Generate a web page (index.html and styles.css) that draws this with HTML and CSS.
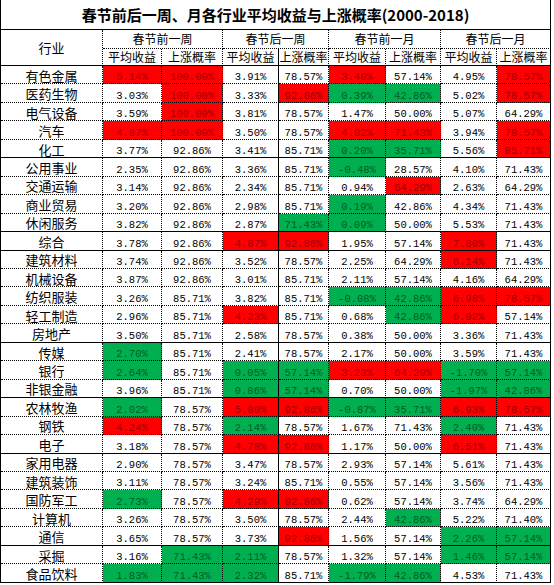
FILE: index.html
```html
<!DOCTYPE html>
<html lang="zh">
<head>
<meta charset="utf-8">
<title>春节前后一周、月各行业平均收益与上涨概率</title>
<link rel="stylesheet" href="styles.css">
</head>
<body>
<div class="sheet">
  <div class="title">春节前后一周、月各行业平均收益与上涨概率(2000-2018)</div>

  <div class="hd ind">行业</div>
  <div class="hd grp">春节前一周</div>
  <div class="hd grp">春节后一周</div>
  <div class="hd grp">春节前一月</div>
  <div class="hd grp last">春节后一月</div>

  <div class="hd sub">平均收益</div>
  <div class="hd sub">上涨概率</div>
  <div class="hd sub solid-r">平均收益</div>
  <div class="hd sub">上涨概率</div>
  <div class="hd sub">平均收益</div>
  <div class="hd sub">上涨概率</div>
  <div class="hd sub">平均收益</div>
  <div class="hd sub last">上涨概率</div>

  <div class="row"><div>有色金属</div><div class="r">5.14%</div><div class="r">100.00%</div><div>3.91%</div><div>78.57%</div><div class="r">3.40%</div><div>57.14%</div><div>4.95%</div><div class="r">78.57%</div></div>
  <div class="row"><div>医药生物</div><div>3.03%</div><div class="r">100.00%</div><div>3.33%</div><div class="r">92.86%</div><div class="g">0.39%</div><div class="g">42.86%</div><div>5.02%</div><div class="r">78.57%</div></div>
  <div class="row"><div>电气设备</div><div>3.59%</div><div class="r">100.00%</div><div>3.81%</div><div>78.57%</div><div>1.47%</div><div>50.00%</div><div>5.07%</div><div>64.29%</div></div>
  <div class="row"><div>汽车</div><div class="r">4.87%</div><div class="r">100.00%</div><div>3.50%</div><div>78.57%</div><div class="r">4.02%</div><div class="r">71.43%</div><div>3.94%</div><div class="r">78.57%</div></div>
  <div class="row s"><div>化工</div><div>3.77%</div><div>92.86%</div><div>3.41%</div><div>85.71%</div><div class="g">0.20%</div><div class="g">35.71%</div><div>5.56%</div><div class="r">85.71%</div></div>
  <div class="row"><div>公用事业</div><div>2.35%</div><div>92.86%</div><div>3.36%</div><div>85.71%</div><div class="g">-0.48%</div><div>28.57%</div><div>4.10%</div><div>71.43%</div></div>
  <div class="row"><div>交通运输</div><div>3.14%</div><div>92.86%</div><div>2.34%</div><div>85.71%</div><div>0.94%</div><div class="r">64.29%</div><div>2.63%</div><div>64.29%</div></div>
  <div class="row"><div>商业贸易</div><div>3.20%</div><div>92.86%</div><div>2.98%</div><div>85.71%</div><div class="g">0.19%</div><div>42.86%</div><div>4.34%</div><div>71.43%</div></div>
  <div class="row s"><div>休闲服务</div><div>3.82%</div><div>92.86%</div><div>2.87%</div><div class="g">71.43%</div><div class="g">0.09%</div><div>50.00%</div><div>5.53%</div><div>71.43%</div></div>
  <div class="row s"><div>综合</div><div>3.78%</div><div>92.86%</div><div class="r">4.87%</div><div class="r">92.86%</div><div>1.95%</div><div>57.14%</div><div class="r">7.80%</div><div>71.43%</div></div>
  <div class="row"><div>建筑材料</div><div>3.74%</div><div>92.86%</div><div>3.52%</div><div>78.57%</div><div>2.25%</div><div>64.29%</div><div class="r">6.14%</div><div>71.43%</div></div>
  <div class="row"><div>机械设备</div><div>3.87%</div><div>92.86%</div><div>3.01%</div><div>85.71%</div><div>2.11%</div><div>57.14%</div><div>4.16%</div><div>64.29%</div></div>
  <div class="row"><div>纺织服装</div><div>3.26%</div><div>85.71%</div><div>3.82%</div><div>85.71%</div><div class="g">-0.08%</div><div class="g">42.86%</div><div class="r">6.98%</div><div class="r">78.57%</div></div>
  <div class="row"><div>轻工制造</div><div>2.96%</div><div>85.71%</div><div class="r">4.23%</div><div>85.71%</div><div>0.68%</div><div class="g">42.86%</div><div class="r">6.02%</div><div>57.14%</div></div>
  <div class="row s"><div>房地产</div><div>3.50%</div><div>85.71%</div><div>2.58%</div><div>78.57%</div><div>0.38%</div><div>50.00%</div><div>3.36%</div><div>71.43%</div></div>
  <div class="row"><div>传媒</div><div class="g">2.70%</div><div>85.71%</div><div>2.41%</div><div>78.57%</div><div>2.17%</div><div>50.00%</div><div>3.59%</div><div>71.43%</div></div>
  <div class="row"><div>银行</div><div class="g">2.64%</div><div>85.71%</div><div class="g">0.05%</div><div class="g">57.14%</div><div class="r">3.23%</div><div class="r">64.29%</div><div class="g">-1.70%</div><div class="g">57.14%</div></div>
  <div class="row s"><div>非银金融</div><div>3.96%</div><div>85.71%</div><div class="g">0.86%</div><div class="g">57.14%</div><div>0.70%</div><div>50.00%</div><div class="g">-1.97%</div><div class="g">42.86%</div></div>
  <div class="row"><div>农林牧渔</div><div class="g">2.02%</div><div>78.57%</div><div class="r">5.80%</div><div class="r">92.86%</div><div class="g">-0.87%</div><div class="g">35.71%</div><div class="r">6.93%</div><div class="r">78.57%</div></div>
  <div class="row"><div>钢铁</div><div class="r">4.24%</div><div>78.57%</div><div class="g">2.14%</div><div>78.57%</div><div>1.67%</div><div>71.43%</div><div class="g">2.40%</div><div>71.43%</div></div>
  <div class="row s"><div>电子</div><div>3.18%</div><div>78.57%</div><div class="r">4.78%</div><div class="r">92.86%</div><div>1.17%</div><div>50.00%</div><div class="r">6.51%</div><div>71.43%</div></div>
  <div class="row"><div>家用电器</div><div>2.90%</div><div>78.57%</div><div>3.47%</div><div>78.57%</div><div>2.93%</div><div>57.14%</div><div>5.61%</div><div>71.43%</div></div>
  <div class="row"><div>建筑装饰</div><div>3.11%</div><div>78.57%</div><div>3.24%</div><div>85.71%</div><div>0.55%</div><div>57.14%</div><div>3.56%</div><div>71.43%</div></div>
  <div class="row"><div>国防军工</div><div class="g">2.73%</div><div>78.57%</div><div class="r">4.29%</div><div class="r">92.86%</div><div>0.62%</div><div>57.14%</div><div>3.74%</div><div>64.29%</div></div>
  <div class="row"><div>计算机</div><div>3.26%</div><div>78.57%</div><div>3.50%</div><div>78.57%</div><div>2.44%</div><div class="g">42.86%</div><div>5.22%</div><div>71.40%</div></div>
  <div class="row s"><div>通信</div><div>3.65%</div><div>78.57%</div><div>3.73%</div><div class="r">92.86%</div><div>1.56%</div><div>57.14%</div><div class="g">2.26%</div><div class="g">57.14%</div></div>
  <div class="row"><div>采掘</div><div>3.16%</div><div class="g">71.43%</div><div class="g">2.11%</div><div>78.57%</div><div>1.32%</div><div>57.14%</div><div class="g">1.46%</div><div class="g">57.14%</div></div>
  <div class="row s"><div>食品饮料</div><div class="g">1.83%</div><div class="g">71.43%</div><div class="g">2.32%</div><div>85.71%</div><div class="g">-1.79%</div><div class="g">42.86%</div><div>4.53%</div><div>71.43%</div></div>
</div>
</body>
</html>
```

FILE: styles.css
```css
html, body {
  margin: 0;
  padding: 0;
  background: #fff;
}

.sheet {
  display: grid;
  grid-template-columns: 102px 59px 61px 56px 50px 57px 55px 56px 54px;
  grid-template-rows: 30px 19px 17px repeat(28, 18.46px);
  width: max-content;
  border-left: 1px solid #000;
  color: #000;
  font-family: "Noto Sans CJK SC", "Liberation Sans", sans-serif;
}

.sheet > div,
.row > div {
  box-sizing: border-box;
  border-right: 1px dotted #000;
  border-bottom: 1px dotted #000;
  display: flex;
  justify-content: center;
  white-space: nowrap;
}

.title {
  grid-column: 1 / -1;
  align-items: center;
  font-size: 15px;
  font-weight: 700;
  line-height: 20px;
  border-bottom-style: solid !important;
  border-right: 1px solid #000 !important;
}

.hd {
  align-items: center;
  font-size: 12px;
  line-height: 16px;
}

.ind {
  grid-row: span 2;
  font-size: 13px;
  border-bottom-style: solid !important;
}

.grp {
  grid-column: span 2;
}

.sub {
  border-bottom-style: solid !important;
}

.solid-r {
  border-right-style: solid !important;
}

.last {
  border-right-style: solid !important;
}

.sheet > .row {
  display: contents;
}

.row > div {
  align-items: flex-end;
  font-family: "Liberation Mono", "DejaVu Sans Mono", monospace;
  font-size: 10.5px;
  line-height: 12px;
}

.row > div:first-child {
  font-family: "Noto Sans CJK SC", sans-serif;
  font-size: 13px;
  line-height: 16px;
  align-items: center;
  padding-top: 2px;
}

.row > div:nth-child(4),
.row > div:nth-child(9) {
  border-right-style: solid;
}

.row.s > div {
  border-bottom-style: solid;
}

.row > .r {
  background: #ff0000;
  color: #a00000;
}

.row > .g {
  background: #00b050;
  color: #005c22;
}
```
